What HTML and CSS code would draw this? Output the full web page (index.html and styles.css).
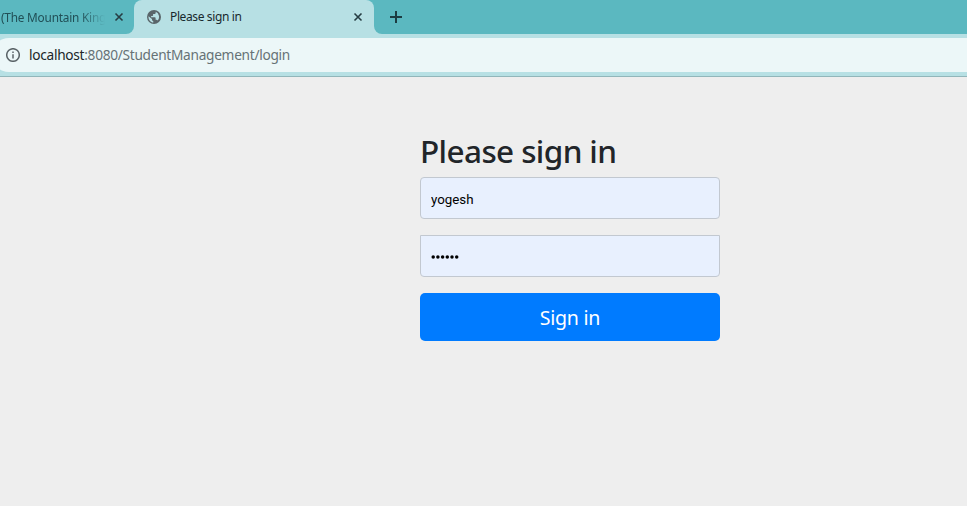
FILE: index.html
```
<!DOCTYPE html>
<html lang="en">
<head>
<meta charset="utf-8">
<title>Please sign in</title>
<link rel="stylesheet" href="styles.css">
</head>
<body>
<header class="browser">
  <div class="tabs">
    <div class="tab tab-previous">
      <span class="tab-title">(The Mountain King</span>
      <svg class="close" viewBox="0 0 10 10"><path d="M1.5 1.5 8.5 8.5M8.5 1.5 1.5 8.5"/></svg>
    </div>
    <div class="tab tab-active">
      <svg class="globe" viewBox="0 0 14 14"><circle cx="7" cy="7" r="7"/><path d="M1.5 6.2 5 9.1v1.1l1.3 1v1.3C3.5 12.2 1.3 9.8 1.5 6.2ZM8.7 1.8v.9c0 .8-.6 1.3-1.3 1.3H6.1v1.3c0 .4-.3.7-.7.7H4.1v1.2h3.8c.4 0 .7.3.7.7v1.8h.7c.6 0 1.1.4 1.3.9A5.5 5.5 0 0 0 8.7 1.8Z"/></svg>
      <span class="tab-title">Please sign in</span>
      <svg class="close" viewBox="0 0 10 10"><path d="M1.5 1.5 8.5 8.5M8.5 1.5 1.5 8.5"/></svg>
    </div>
    <svg class="new-tab" viewBox="0 0 12 12"><path d="M6 0v12M0 6h12"/></svg>
  </div>
  <div class="toolbar">
    <div class="address">
      <svg class="info" viewBox="0 0 14 14"><circle cx="7" cy="7" r="6.3"/><path d="M7 6.2v4.3M7 3.4V5"/></svg>
      <span class="url"><span class="host">localhost</span>:8080/StudentManagement/login</span>
    </div>
  </div>
</header>
<main class="page">
  <form class="signin">
    <h1>Please sign in</h1>
    <input class="field username" type="text" value="yogesh" aria-label="Username">
    <div class="field password">
      <svg class="dots" viewBox="0 0 28 4"><circle cx="2.2" cy="2" r="1.75"/><circle cx="6.9" cy="2" r="1.75"/><circle cx="11.6" cy="2" r="1.75"/><circle cx="16.3" cy="2" r="1.75"/><circle cx="21" cy="2" r="1.75"/><circle cx="25.7" cy="2" r="1.75"/></svg>
    </div>
    <button type="button"><span>Sign in</span></button>
  </form>
</main>
</body>
</html>
```
FILE: styles.css
```
* { box-sizing: border-box; }
body {
  margin: 0;
  height: 506px;
  overflow: hidden;
  background: #eee;
  font-family: "Noto Sans", sans-serif;
  color: #212529;
}
svg { display: block; flex: none; fill: none; }
.browser { background: #b7e0e4; }
.tabs { display: flex; height: 34px; background: linear-gradient(#5bb8c0 0 16px, #b7e0e4 16px); }
.tab { display: flex; align-items: center; height: 34px; font-size: 12px; }
.tab-title { white-space: nowrap; line-height: 16px; }
.tab-previous {
  width: 134px;
  padding-left: 1px;
  background: #5bb8c0;
  border-bottom-right-radius: 8px;
  color: #214f56;
}
.tab-previous .tab-title {
  width: 113px;
  font-size: 11.8px;
  letter-spacing: -.2px;
  -webkit-mask-image: linear-gradient(90deg, #000 70%, transparent 92%);
  mask-image: linear-gradient(90deg, #000 70%, transparent 92%);
}
.close { width: 10px; height: 10px; stroke: #263d43; stroke-width: 1.6; }
.tab-active {
  width: 240px;
  padding: 0 11px 0 13px;
  border-radius: 8px 8px 0 0;
  background: #b7e0e4;
  color: #17282d;
}
.tab-active .tab-title { margin-left: 9px; letter-spacing: -.38px; }
.tab-active .close { margin-left: auto; }
.globe { width: 14px; height: 14px; fill: #59656a; }
.globe path { fill: #b7e0e4; }
.tabs::after { content: ""; order: 1; flex: 1; background: #5bb8c0; }
.new-tab {
  order: 1;
  width: 44px;
  height: 34px;
  padding: 11px 16px;
  background: #5bb8c0;
  border-bottom-left-radius: 8px;
  stroke: #1c3c42;
  stroke-width: 2;
}
.toolbar {
  height: 43px;
  padding-top: 4px;
  border-bottom: 1px solid #91b6ba;
}
.address {
  display: flex;
  align-items: center;
  height: 34px;
  margin-left: -8px;
  padding-left: 14px;
  border-radius: 17px 0 0 17px;
  background: #ecf7f8;
}
.info { width: 14px; height: 14px; stroke: #5b6468; stroke-width: 1.5; }
.url { margin-left: 9px; font-size: 13.7px; line-height: 20px; color: #667276; letter-spacing: -.29px; }
.host { color: #202629; }
.page { display: flex; padding: 55px 0 0 420px; }
.signin { width: 300px; }
h1 {
  margin: 0 0 7px;
  font-size: 31.5px;
  font-weight: 500;
  line-height: 38px;
  letter-spacing: -.61px;
  white-space: nowrap;
}
.field {
  display: flex;
  align-items: center;
  width: 300px;
  height: 42px;
  margin: 0 0 16px;
  padding: 0 10px;
  border: 1px solid #c2c8d0;
  background: #e8f0fe;
}
.username {
  padding-top: 3px;
  border-radius: 4px;
  outline: 0;
  font: 13.33px Roboto, sans-serif;
  color: #000;
}
.password { padding-top: 2px; border-radius: 0 0 4px 4px; }
.dots { width: 28px; height: 4px; fill: #000; }
button {
  display: block;
  width: 300px;
  height: 48px;
  padding: 1px 0 0;
  border: 0;
  border-radius: 5px;
  background: #007bff;
  color: #fff;
  font: 19.6px/30px "Noto Sans", sans-serif;
  letter-spacing: -.25px;
}
```
